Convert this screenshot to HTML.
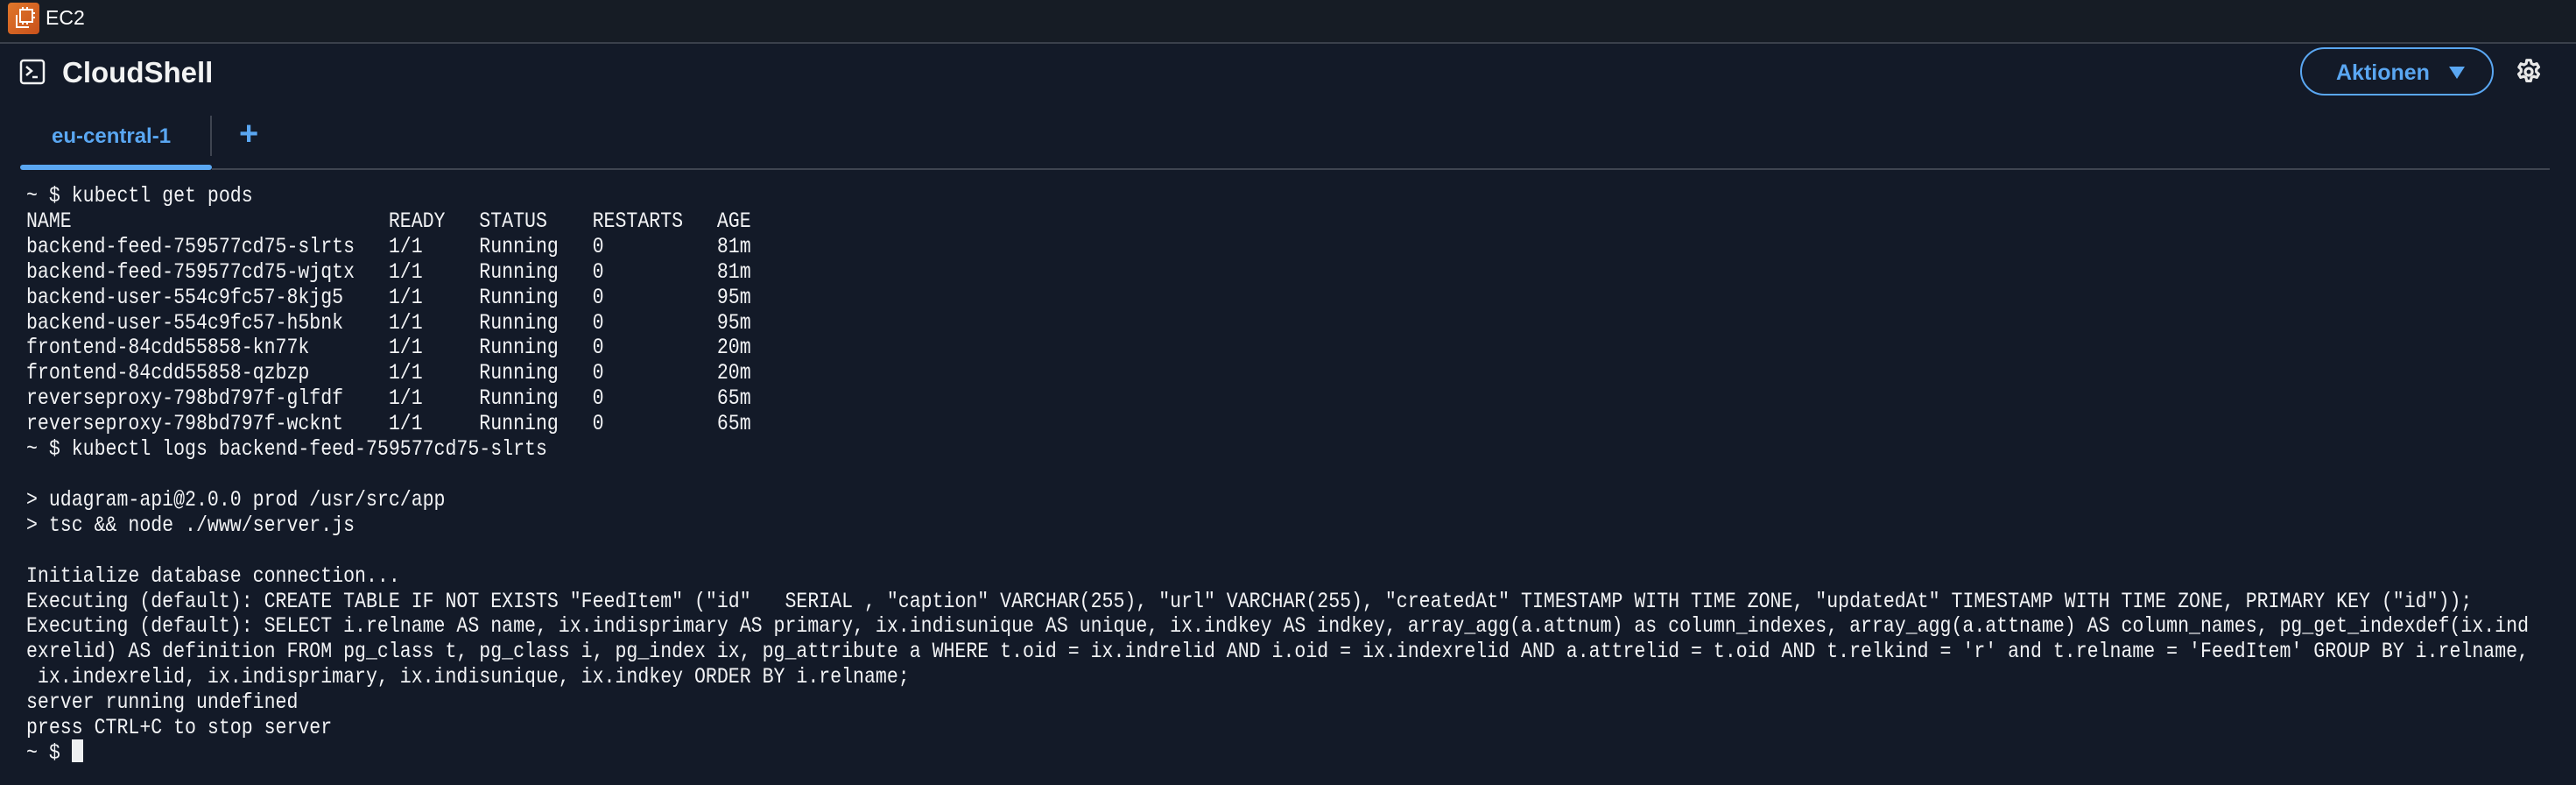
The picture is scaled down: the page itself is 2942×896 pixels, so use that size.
<!DOCTYPE html>
<html><head><meta charset="utf-8"><style>
html,body{margin:0;padding:0;width:2942px;height:896px;overflow:hidden;background:#131a28;font-family:"Liberation Sans",sans-serif}
.top{position:absolute;left:0;top:0;width:2942px;height:48px;background:#161c25;border-bottom:2px solid #3a404b}
.ec2{position:absolute;left:9px;top:3px;width:36px;height:36px;border-radius:4px;background:linear-gradient(135deg,#e0772b,#c8511b)}
.ec2t{position:absolute;left:52px;top:7px;color:#fff;font-size:23px}
.title{position:absolute;left:71px;top:64px;color:#f2f3f3;font-size:33px;font-weight:bold}
.tab{position:absolute;left:59px;top:142px;color:#5aa7f2;font-size:24px;font-weight:bold}
.bar{position:absolute;left:23px;top:188px;width:219px;height:6px;border-radius:3px;background:#5aa7f2}
.line{position:absolute;left:242px;top:192px;width:2670px;height:2px;background:#3e4450}
.sep{position:absolute;left:240px;top:132px;width:2px;height:46px;background:#3e4450}
.plus{position:absolute;left:273px;top:138px;color:#5aa7f2;font-size:38px;line-height:30px;font-weight:bold}
.btn{position:absolute;left:2627px;top:54px;width:217px;height:51px;border:2px solid #5aa7f2;border-radius:28px;box-sizing:content-box}
.btn span{position:absolute;left:39px;top:13px;color:#5aa7f2;font-size:25px;font-weight:bold}
.btn i{position:absolute;left:168px;top:20px;width:0;height:0;border-left:9px solid transparent;border-right:9px solid transparent;border-top:14px solid #5aa7f2}
pre{position:absolute;left:30px;top:210px;margin:0;color:#f2f3f5;font-family:"Liberation Mono",monospace;font-size:25px;line-height:28.9px;transform:scaleX(0.862);transform-origin:0 0;white-space:pre}
.cur{position:absolute;left:82px;top:844px;width:13px;height:26px;background:#eef0f2}
</style></head><body>
<div class="top"></div>
<div class="ec2"><svg width="36" height="36" viewBox="0 0 36 36" fill="none" stroke="#fff" stroke-width="2"><rect x="14" y="8" width="14" height="14"/><path d="M10 14v14h14"/><path d="M17 5v3M22 5v3M17 22v3M22 22v3M28 12h3M28 17h3"/></svg></div>
<div class="ec2t">EC2</div>
<svg style="position:absolute;left:22px;top:67px" width="30" height="30" viewBox="0 0 30 30" fill="none" stroke="#f2f3f3" stroke-width="2.5"><rect x="2" y="2" width="26" height="26" rx="3"/><path d="M8 9l6 5-6 5M15 21h6"/></svg>
<div class="title">CloudShell</div>
<div class="tab">eu-central-1</div>
<div class="sep"></div>
<div class="plus">+</div>
<div class="bar"></div>
<div class="line"></div>
<div class="btn"><span>Aktionen</span><i></i></div>
<svg style="position:absolute;left:2872px;top:66px" width="32" height="32" viewBox="0 0 24 24" fill="none" stroke="#e8e8e8" stroke-width="2.4" stroke-linejoin="round"><path d="M10.3 2h3.4l.6 2.8 1.9 1.1 2.7-.9 1.7 2.9-2.1 1.9v2.2l2.1 1.9-1.7 2.9-2.7-.9-1.9 1.1-.6 2.8h-3.4l-.6-2.8-1.9-1.1-2.7.9-1.7-2.9 2.1-1.9v-2.2L3.6 8l1.7-2.9 2.7.9 1.9-1.1z"/><circle cx="12" cy="12" r="3"/></svg>
<pre>~ $ kubectl get pods
NAME                            READY   STATUS    RESTARTS   AGE
backend-feed-759577cd75-slrts   1/1     Running   0          81m
backend-feed-759577cd75-wjqtx   1/1     Running   0          81m
backend-user-554c9fc57-8kjg5    1/1     Running   0          95m
backend-user-554c9fc57-h5bnk    1/1     Running   0          95m
frontend-84cdd55858-kn77k       1/1     Running   0          20m
frontend-84cdd55858-qzbzp       1/1     Running   0          20m
reverseproxy-798bd797f-glfdf    1/1     Running   0          65m
reverseproxy-798bd797f-wcknt    1/1     Running   0          65m
~ $ kubectl logs backend-feed-759577cd75-slrts

> udagram-api@2.0.0 prod /usr/src/app
> tsc &amp;&amp; node ./www/server.js

Initialize database connection...
Executing (default): CREATE TABLE IF NOT EXISTS "FeedItem" ("id"   SERIAL , "caption" VARCHAR(255), "url" VARCHAR(255), "createdAt" TIMESTAMP WITH TIME ZONE, "updatedAt" TIMESTAMP WITH TIME ZONE, PRIMARY KEY ("id"));
Executing (default): SELECT i.relname AS name, ix.indisprimary AS primary, ix.indisunique AS unique, ix.indkey AS indkey, array_agg(a.attnum) as column_indexes, array_agg(a.attname) AS column_names, pg_get_indexdef(ix.ind
exrelid) AS definition FROM pg_class t, pg_class i, pg_index ix, pg_attribute a WHERE t.oid = ix.indrelid AND i.oid = ix.indexrelid AND a.attrelid = t.oid AND t.relkind = 'r' and t.relname = 'FeedItem' GROUP BY i.relname,
 ix.indexrelid, ix.indisprimary, ix.indisunique, ix.indkey ORDER BY i.relname;
server running undefined
press CTRL+C to stop server
~ $ </pre>
<div class="cur"></div>
</body></html>
